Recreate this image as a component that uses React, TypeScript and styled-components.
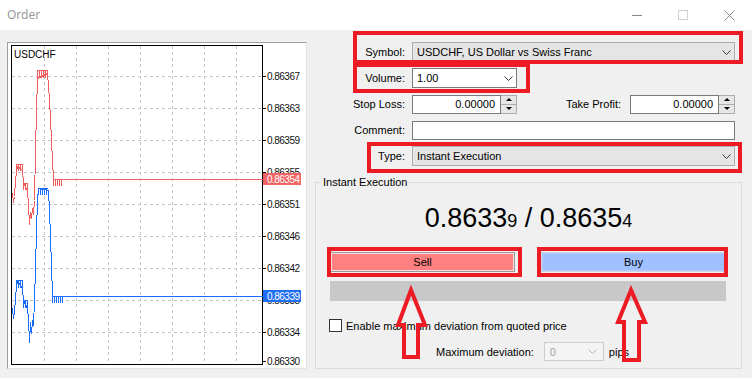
import React from "react";
import styled, { createGlobalStyle } from "styled-components";

const GlobalStyle = createGlobalStyle`
  html, body {
    margin: 0;
    padding: 0;
    background: #f0f0f0;
  }
  body {
    font-family: "Liberation Sans", Arial, sans-serif;
    font-size: 11px;
    color: #000;
  }
  * {
    box-sizing: border-box;
  }
`;

const RED = "#ed1c24";

const Window = styled.div`
  position: relative;
  width: 752px;
  height: 378px;
  background: #f0f0f0;
  overflow: hidden;
  display: flex;
  flex-direction: column;
`;

const TitleBar = styled.div`
  height: 30px;
  flex-shrink: 0;
  background: #fff;
  display: flex;
  align-items: center;
  padding-left: 7px;
  padding-right: 0;
`;

const Title = styled.span`
  flex: 1;
  font-family: "Noto Sans", "Open Sans", sans-serif;
  font-size: 12px;
  color: #999;
  margin-top: -2px;
`;

const Control = styled.div`
  width: 46px;
  height: 30px;
  display: flex;
  align-items: center;
  justify-content: center;
`;

const Body = styled.div`
  flex: 1;
  display: flex;
  padding: 12px 0 0 7px;
`;

const ChartPanel = styled.div`
  width: 300px;
  height: 327px;
  background: #fff;
  border: 1px solid;
  border-color: #a0a0a0 #e3e3e3 #e3e3e3 #a0a0a0;

  svg {
    display: block;
  }
`;

const Side = styled.div`
  width: 427px;
  margin-left: 8px;
  display: flex;
  flex-direction: column;
`;

const Fields = styled.div`
  display: flex;
  flex-direction: column;
  gap: 6px;
  padding-right: 7px;
`;

const FieldRow = styled.div`
  position: relative;
  display: grid;
  grid-template-columns: 90px 1fr;
  column-gap: 7px;
  height: 20px;
  align-items: center;
`;

const Label = styled.label`
  text-align: right;
  white-space: nowrap;
`;

const Mark = styled.div<{ $inset: string }>`
  position: absolute;
  inset: ${(p) => p.$inset};
  border: 4px solid ${RED};
  pointer-events: none;
`;

const Select = styled.div<{ $white?: boolean; $width?: number }>`
  height: 20px;
  width: ${(p) => (p.$width ? `${p.$width}px` : "auto")};
  display: flex;
  align-items: center;
  justify-content: space-between;
  padding: 0 3px 0 4px;
  border: 1px solid ${(p) => (p.$white ? "#7a7a7a" : "#adadad")};
  background: ${(p) => (p.$white ? "#fff" : "#e5e5e5")};
  white-space: nowrap;
`;

const Edit = styled.div<{ $right?: boolean }>`
  height: 19px;
  flex: 1;
  background: #fff;
  border: 1px solid #7a7a7a;
  text-align: ${(p) => (p.$right ? "right" : "left")};
  padding: 0 5px 0 4px;
  line-height: 17px;
`;

const SplitField = styled.div`
  display: flex;
  align-items: center;
`;

const Spin = styled.div`
  width: 105px;
  height: 19px;
  display: flex;
`;

const SpinButtons = styled.div`
  width: 16px;
  display: flex;
  flex-direction: column;
  border: 1px solid #adadad;
  border-left: none;
  background: #e6e6e6;
`;

const SpinArrow = styled.div<{ $down?: boolean }>`
  flex: 1;
  display: flex;
  align-items: center;
  justify-content: center;
  border-top: ${(p) => (p.$down ? "1px solid #adadad" : "none")};

  &::before {
    content: "";
    border-left: 3px solid transparent;
    border-right: 3px solid transparent;
    ${(p) =>
      p.$down ? "border-top: 3px solid #000;" : "border-bottom: 3px solid #000;"}
  }
`;

const SideLabel = styled.span`
  flex: 1;
  text-align: right;
  padding-right: 9px;
  white-space: nowrap;
`;

const Group = styled.fieldset`
  flex: 1;
  margin: 10px 0 9px 0;
  padding: 0;
  min-width: 0;
  border: 1px solid #dcdcdc;
  display: flex;
  flex-direction: column;
`;

const Legend = styled.legend`
  margin-left: 5px;
  padding: 0 2px;
  line-height: 13px;
`;

const Quote = styled.div`
  margin-top: 14px;
  text-align: center;
  font-size: 27px;
  line-height: 31px;
  color: #000;
`;

const Pip = styled.span`
  font-size: 18px;
`;

const Trade = styled.div`
  margin: 15px 15px 0 14px;
  display: grid;
  grid-template-columns: 1fr 1fr;
  column-gap: 26px;
`;

const TradeButton = styled.button<{ $kind: "sell" | "buy" }>`
  position: relative;
  height: 20px;
  font: inherit;
  color: #000;
  padding: 0;
  background: ${(p) => (p.$kind === "sell" ? "#ff8080" : "#a0c0ff")};
  border: 1px solid ${(p) => (p.$kind === "sell" ? "#9a9a9a" : "#c8d4ea")};
  box-shadow: inset 0 0 0 1px
    ${(p) => (p.$kind === "sell" ? "#f4dede" : "#b4ccf6")};
`;

const Bar = styled.div`
  margin: 9px 15px 0 14px;
  height: 20px;
  background: #c8c8c8;
`;

const CheckRow = styled.div`
  margin: 18px 0 0 13px;
  display: flex;
  align-items: center;
  height: 13px;
`;

const Box = styled.span`
  width: 13px;
  height: 13px;
  border: 1px solid #333;
  background: #fff;
  margin-right: 4px;
`;

const DevRow = styled.div`
  margin-top: 10px;
  padding-left: 120px;
  display: flex;
  align-items: center;
  height: 19px;
`;

const DevCombo = styled.div`
  width: 60px;
  height: 19px;
  margin: 0 5px 0 10px;
  display: flex;
  align-items: center;
  justify-content: space-between;
  padding: 0 6px 0 5px;
  border: 1px solid #cccccc;
  background: #f4f4f4;
  color: #a0a0a0;
`;

const Arrow = styled.svg<{ $left: number; $top: number }>`
  position: absolute;
  left: ${(p) => p.$left}px;
  top: ${(p) => p.$top}px;
  overflow: visible;
  pointer-events: none;
`;

const Chevron = ({ color = "#333" }: { color?: string }) => (
  <svg width="9" height="5" viewBox="0 0 9 5">
    <polyline points="0.5,0.5 4.5,4.5 8.5,0.5" fill="none" stroke={color} strokeWidth="1" />
  </svg>
);

const comb = (x0: number, x1: number, y0: number, y1: number) => {
  let d = `M${x0} ${y0 + 0.5}H${x1 + 1}`;
  for (let x = x0; x <= x1; x += 2) d += `M${x + 0.5} ${y0}V${y1}`;
  return d;
};

const redLine: [number, number][] = [
  [12, 193], [13, 202], [14, 196], [15, 180], [16, 172], [17, 166],
  [22, 170], [23, 183], [27, 190], [28, 204], [29, 224], [30, 212],
  [31, 218], [32, 208], [33, 214], [34, 200], [35, 150], [36, 110],
  [37, 78], [47, 73], [48, 85], [49, 100], [50, 118], [51, 140],
  [52, 160], [53, 179], [262, 179],
];

const blueLine: [number, number][] = [
  [12, 308], [13, 318], [14, 312], [15, 298], [16, 286], [17, 281],
  [22, 288], [23, 300], [27, 308], [28, 318], [29, 342], [30, 322],
  [31, 333], [32, 320], [33, 325], [34, 300], [35, 268], [36, 230],
  [37, 200], [38, 188], [48, 190], [49, 210], [50, 237], [51, 265],
  [52, 296], [262, 296],
];

const axis: [string, number][] = [
  ["0.86367", 76],
  ["0.86363", 108],
  ["0.86359", 140],
  ["0.86355", 172],
  ["0.86351", 204],
  ["0.86346", 236],
  ["0.86342", 268],
  ["0.86338", 300],
  ["0.86334", 332],
  ["0.86330", 361],
];

const PriceChart = () => {
  const pts = (l: [number, number][]) => l.map(([x, y]) => `${x + 0.5},${y + 0.5}`).join(" ");
  const hGrid = [76, 108, 140, 172, 204, 236, 268, 300, 332];
  const vGrid = [44, 76, 108, 140, 172, 204, 236];
  return (
    <svg width="298" height="325" viewBox="8 43 298 325" fontFamily="Liberation Sans, Arial, sans-serif">
      <g stroke="#c4c4c4" strokeDasharray="3 3" shapeRendering="crispEdges">
        {hGrid.map((y) => (
          <line key={`h${y}`} x1="12" x2="262" y1={y + 0.5} y2={y + 0.5} />
        ))}
        {vGrid.map((x) => (
          <line key={`v${x}`} x1={x + 0.5} x2={x + 0.5} y1="46" y2="364" />
        ))}
      </g>
      <g stroke="#000" shapeRendering="crispEdges">
        {axis.map(([, y]) => (
          <line key={y} x1="263" x2="266" y1={y + 0.5} y2={y + 0.5} />
        ))}
      </g>
      <rect x="11.5" y="45.5" width="251" height="319" fill="none" stroke="#000" shapeRendering="crispEdges" />
      <text x="14" y="57.5" fontSize="10" fill="#000">USDCHF</text>
      {axis.map(([t, y]) => (
        <text key={t} x="267" y={y + 3.6} fontSize="10" fill="#111" textLength="33">
          {t}
        </text>
      ))}
      <g fill="none" strokeWidth="1" shapeRendering="crispEdges">
        <polyline points={pts(redLine)} stroke="#f25c5c" />
        <path d={comb(16, 22, 164, 171) + comb(23, 27, 183, 190) + comb(37, 47, 70, 78) + comb(53, 62, 179, 186)} stroke="#f25c5c" />
        <polyline points={pts(blueLine)} stroke="#1a6cff" />
        <path d={comb(16, 22, 280, 288) + comb(23, 27, 300, 308) + comb(38, 47, 188, 195) + comb(52, 62, 296, 303)} stroke="#1a6cff" />
      </g>
      <rect x="263" y="173" width="38" height="12" fill="#f06464" />
      <text x="267" y="182.6" fontSize="10" fill="#fff" textLength="33">0.86354</text>
      <rect x="263" y="290" width="38" height="12" fill="#1f6ff5" />
      <text x="267" y="299.6" fontSize="10" fill="#fff" textLength="33">0.86339</text>
    </svg>
  );
};

export default function App() {
  return (
    <>
      <GlobalStyle />
      <Window>
        <TitleBar>
          <Title>Order</Title>
          <Control>
            <svg width="10" height="10" viewBox="0 0 10 10">
              <line x1="0" x2="10" y1="5.5" y2="5.5" stroke="#8a8a8a" />
            </svg>
          </Control>
          <Control>
            <svg width="10" height="10" viewBox="0 0 10 10">
              <rect x="0.5" y="0.5" width="9" height="9" fill="none" stroke="#d0d0d0" />
            </svg>
          </Control>
          <Control>
            <svg width="11" height="11" viewBox="0 0 11 11">
              <path d="M0.5 0.5L10.5 10.5M10.5 0.5L0.5 10.5" stroke="#8a8a8a" />
            </svg>
          </Control>
        </TitleBar>
        <Body>
          <ChartPanel>
            <PriceChart />
          </ChartPanel>
          <Side>
            <Fields>
              <FieldRow>
                <Label>Symbol:</Label>
                <Select>
                  USDCHF, US Dollar vs Swiss Franc
                  <Chevron />
                </Select>
                <Mark $inset="-11px -8px -2px 38px" />
              </FieldRow>
              <FieldRow>
                <Label>Volume:</Label>
                <Select $white $width={105}>
                  1.00
                  <Chevron />
                </Select>
                <Mark $inset="-5px 205px -5px 38px" />
              </FieldRow>
              <FieldRow>
                <Label>Stop Loss:</Label>
                <SplitField>
                  <Spin>
                    <Edit $right>0.00000</Edit>
                    <SpinButtons>
                      <SpinArrow />
                      <SpinArrow $down />
                    </SpinButtons>
                  </Spin>
                  <SideLabel>Take Profit:</SideLabel>
                  <Spin>
                    <Edit $right>0.00000</Edit>
                    <SpinButtons>
                      <SpinArrow />
                      <SpinArrow $down />
                    </SpinButtons>
                  </Spin>
                </SplitField>
              </FieldRow>
              <FieldRow>
                <Label>Comment:</Label>
                <Edit />
              </FieldRow>
              <FieldRow>
                <Label>Type:</Label>
                <Select>
                  Instant Execution
                  <Chevron />
                </Select>
                <Mark $inset="-4px -7px -7px 52px" />
              </FieldRow>
            </Fields>
            <Group>
              <Legend>Instant Execution</Legend>
              <Quote>
                0.8633<Pip>9</Pip> / 0.8635<Pip>4</Pip>
              </Quote>
              <Trade>
                <TradeButton $kind="sell">
                  Sell
                  <Mark $inset="-6px -8px -6px -4px" />
                </TradeButton>
                <TradeButton $kind="buy">
                  Buy
                  <Mark $inset="-6px -3px -6px -5px" />
                </TradeButton>
              </Trade>
              <Bar />
              <CheckRow>
                <Box />
                Enable maximum deviation from quoted price
              </CheckRow>
              <DevRow>
                Maximum deviation:
                <DevCombo>
                  0
                  <Chevron color="#b0b0b0" />
                </DevCombo>
                pips
              </DevRow>
            </Group>
          </Side>
        </Body>
        <Arrow $left={390} $top={280} width="42" height="84" viewBox="0 0 42 84">
          <polygon points="21,10 8,45 14,45 14,77 28,77 28,45 35,45" fill="none" stroke={RED} strokeWidth="4" />
        </Arrow>
        <Arrow $left={611} $top={280} width="42" height="84" viewBox="0 0 42 84">
          <polygon points="20,10 7,42 13,42 13,80 28,80 28,42 34,42" fill="none" stroke={RED} strokeWidth="4" />
        </Arrow>
      </Window>
    </>
  );
}
